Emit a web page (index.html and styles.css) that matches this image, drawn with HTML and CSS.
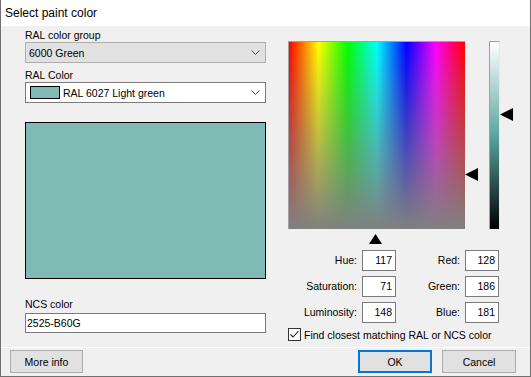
FILE: index.html
```html
<!DOCTYPE html>
<html>
<head>
<meta charset="utf-8">
<link rel="stylesheet" href="styles.css">
</head>
<body>
<div class="window">
  <div class="titlebar">Select paint color</div>
  <div class="content">
    <div class="left">
      <div class="label label-group">RAL color group</div>
      <div class="combo combo-disabled">
        <span class="combo-text">6000 Green</span>
        <svg class="chev" width="9" height="5" viewBox="0 0 9 5"><polyline points="0.5,0.5 4.5,4.5 8.5,0.5" fill="none" stroke="#444" stroke-width="1"/></svg>
      </div>
      <div class="label label-color">RAL Color</div>
      <div class="combo combo-white">
        <span class="mini-swatch"></span>
        <span class="combo-text">RAL 6027 Light green</span>
        <svg class="chev" width="9" height="5" viewBox="0 0 9 5"><polyline points="0.5,0.5 4.5,4.5 8.5,0.5" fill="none" stroke="#444" stroke-width="1"/></svg>
      </div>
      <div class="preview"></div>
      <div class="label label-ncs">NCS color</div>
      <div class="textbox">2525-B60G</div>
    </div>
    <div class="right">
      <div class="picker">
        <div class="field"></div>
        <div class="lumbar"></div>
        <svg class="arrow arrow-sat" width="13" height="13" viewBox="0 0 13 13"><polygon points="0,6.5 13,0 13,13" fill="#000"/></svg>
        <svg class="arrow arrow-lum" width="13" height="13" viewBox="0 0 13 13"><polygon points="0,6.5 13,0 13,13" fill="#000"/></svg>
        <svg class="arrow arrow-hue" width="13" height="10" viewBox="0 0 13 10"><polygon points="6.5,0 13,10 0,10" fill="#000"/></svg>
      </div>
      <div class="values">
        <span class="vlabel">Hue:</span><span class="vbox">117</span>
        <span class="vlabel">Red:</span><span class="vbox">128</span>
        <span class="vlabel">Saturation:</span><span class="vbox">71</span>
        <span class="vlabel">Green:</span><span class="vbox">186</span>
        <span class="vlabel">Luminosity:</span><span class="vbox">148</span>
        <span class="vlabel">Blue:</span><span class="vbox">181</span>
      </div>
      <div class="check">
        <span class="checkbox"><svg width="11" height="11" viewBox="0 0 11 11"><polyline points="1.5,5.5 4,8 9.5,2" fill="none" stroke="#222" stroke-width="1.1"/></svg></span>
        <span>Find closest matching RAL or NCS color</span>
      </div>
    </div>
  </div>
  <div class="footer">
    <button class="btn btn-more">More info</button>
    <div class="footer-right">
      <button class="btn btn-ok">OK</button>
      <button class="btn">Cancel</button>
    </div>
  </div>
</div>
</body>
</html>
```

FILE: styles.css
```css
* { box-sizing: border-box; }
html, body { margin: 0; padding: 0; background: #f0f0f0; }
body {
  font-family: "Liberation Sans", Arial, sans-serif;
  font-size: 10.5px;
  color: #000;
}
.window {
  width: 531px;
  height: 377px;
  border-left: 1px solid #707070;
  border-right: 1px solid #707070;
  border-bottom: 1px solid #707070;
  background: #f0f0f0;
  display: flex;
  flex-direction: column;
}
.titlebar {
  height: 26px;
  line-height: 26px;
  background: #fff;
  padding-left: 4px;
  font-size: 12px;
}
.content {
  height: 321px;
  display: flex;
  padding-left: 24px;
  gap: 22px;
}
.left {
  width: 241px;
  padding-top: 2px;
  display: flex;
  flex-direction: column;
}
.label { height: 14px; line-height: 14px; }
.label-color { margin-top: 5px; }
.label-ncs { margin-top: 18px; }
.combo {
  height: 21px;
  display: flex;
  align-items: center;
  padding-left: 3px;
  padding-right: 5px;
}
.combo-disabled { background: #e1e1e1; border: 1px solid #adadad; }
.combo-white { background: #fff; border: 1px solid #7a7a7a; padding-left: 4px; }
.combo-text { flex: 1; }
.chev { flex: none; }
.mini-swatch {
  width: 30px;
  height: 13px;
  border: 1px solid #000;
  background: #80bab5;
  margin-right: 3px;
}
.preview {
  margin-top: 19px;
  height: 157px;
  border: 1px solid #000;
  background: #80bab5;
}
.textbox {
  margin-top: 2px;
  height: 20px;
  line-height: 18px;
  border: 1px solid #7a7a7a;
  background: #fff;
  padding-left: 1px;
}
.right {
  padding-top: 15px;
  width: 230px;
}
.picker {
  position: relative;
  height: 188px;
  display: flex;
  margin-bottom: 21px;
}
.field {
  width: 177px;
  height: 188px;
  border-top: 1px solid #a0a0a0;
  border-left: 1px solid #a0a0a0;
  background:
    linear-gradient(to bottom, rgba(128,128,128,0), rgba(128,128,128,1)),
    linear-gradient(to right, #f00 0%, #ff0 16.67%, #0f0 33.33%, #0ff 50%, #00f 66.67%, #f0f 83.33%, #f00 100%);
}
.lumbar {
  margin-left: 24px;
  width: 11px;
  height: 188px;
  border-top: 1px solid #a0a0a0;
  border-left: 1px solid #a0a0a0;
  border-right: 1px solid #e8e8e8;
  background: linear-gradient(to bottom, #fff 0%, rgb(90,165,160) 50%, #000 100%);
}
.arrow { position: absolute; display: block; }
.arrow-sat { left: 177px; top: 127px; }
.arrow-lum { left: 212px; top: 67px; }
.arrow-hue { left: 81px; top: 193px; }
.values {
  display: grid;
  grid-template-columns: 74px 34px 69px 34px;
  grid-auto-rows: 21px;
  row-gap: 5px;
}
.vlabel {
  text-align: right;
  padding-right: 5px;
  line-height: 21px;
}
.vbox {
  border: 1px solid #7a7a7a;
  background: #fff;
  text-align: right;
  padding-right: 3px;
  line-height: 19px;
}
.check {
  margin-top: 5px;
  display: flex;
  align-items: center;
  gap: 3px;
  height: 13px;
}
.checkbox {
  width: 13px;
  height: 13px;
  border: 1px solid #333;
  background: #fff;
  display: flex;
}
.checkbox svg { display: block; }
.footer {
  flex: 1;
  border-top: 1px solid #fff;
  display: flex;
  justify-content: space-between;
  padding: 2px 14px 0 9px;
}
.footer-right { display: flex; gap: 10px; }
.btn {
  font-family: "Liberation Sans", Arial, sans-serif;
  font-size: 10.5px;
  color: #000;
  height: 23px;
  width: 74px;
  background: #e1e1e1;
  border: 1px solid #adadad;
  padding: 0;
  margin: 0;
}
.btn-more { width: 73px; }
.btn-ok { border: 2px solid #0078d7; }
```
